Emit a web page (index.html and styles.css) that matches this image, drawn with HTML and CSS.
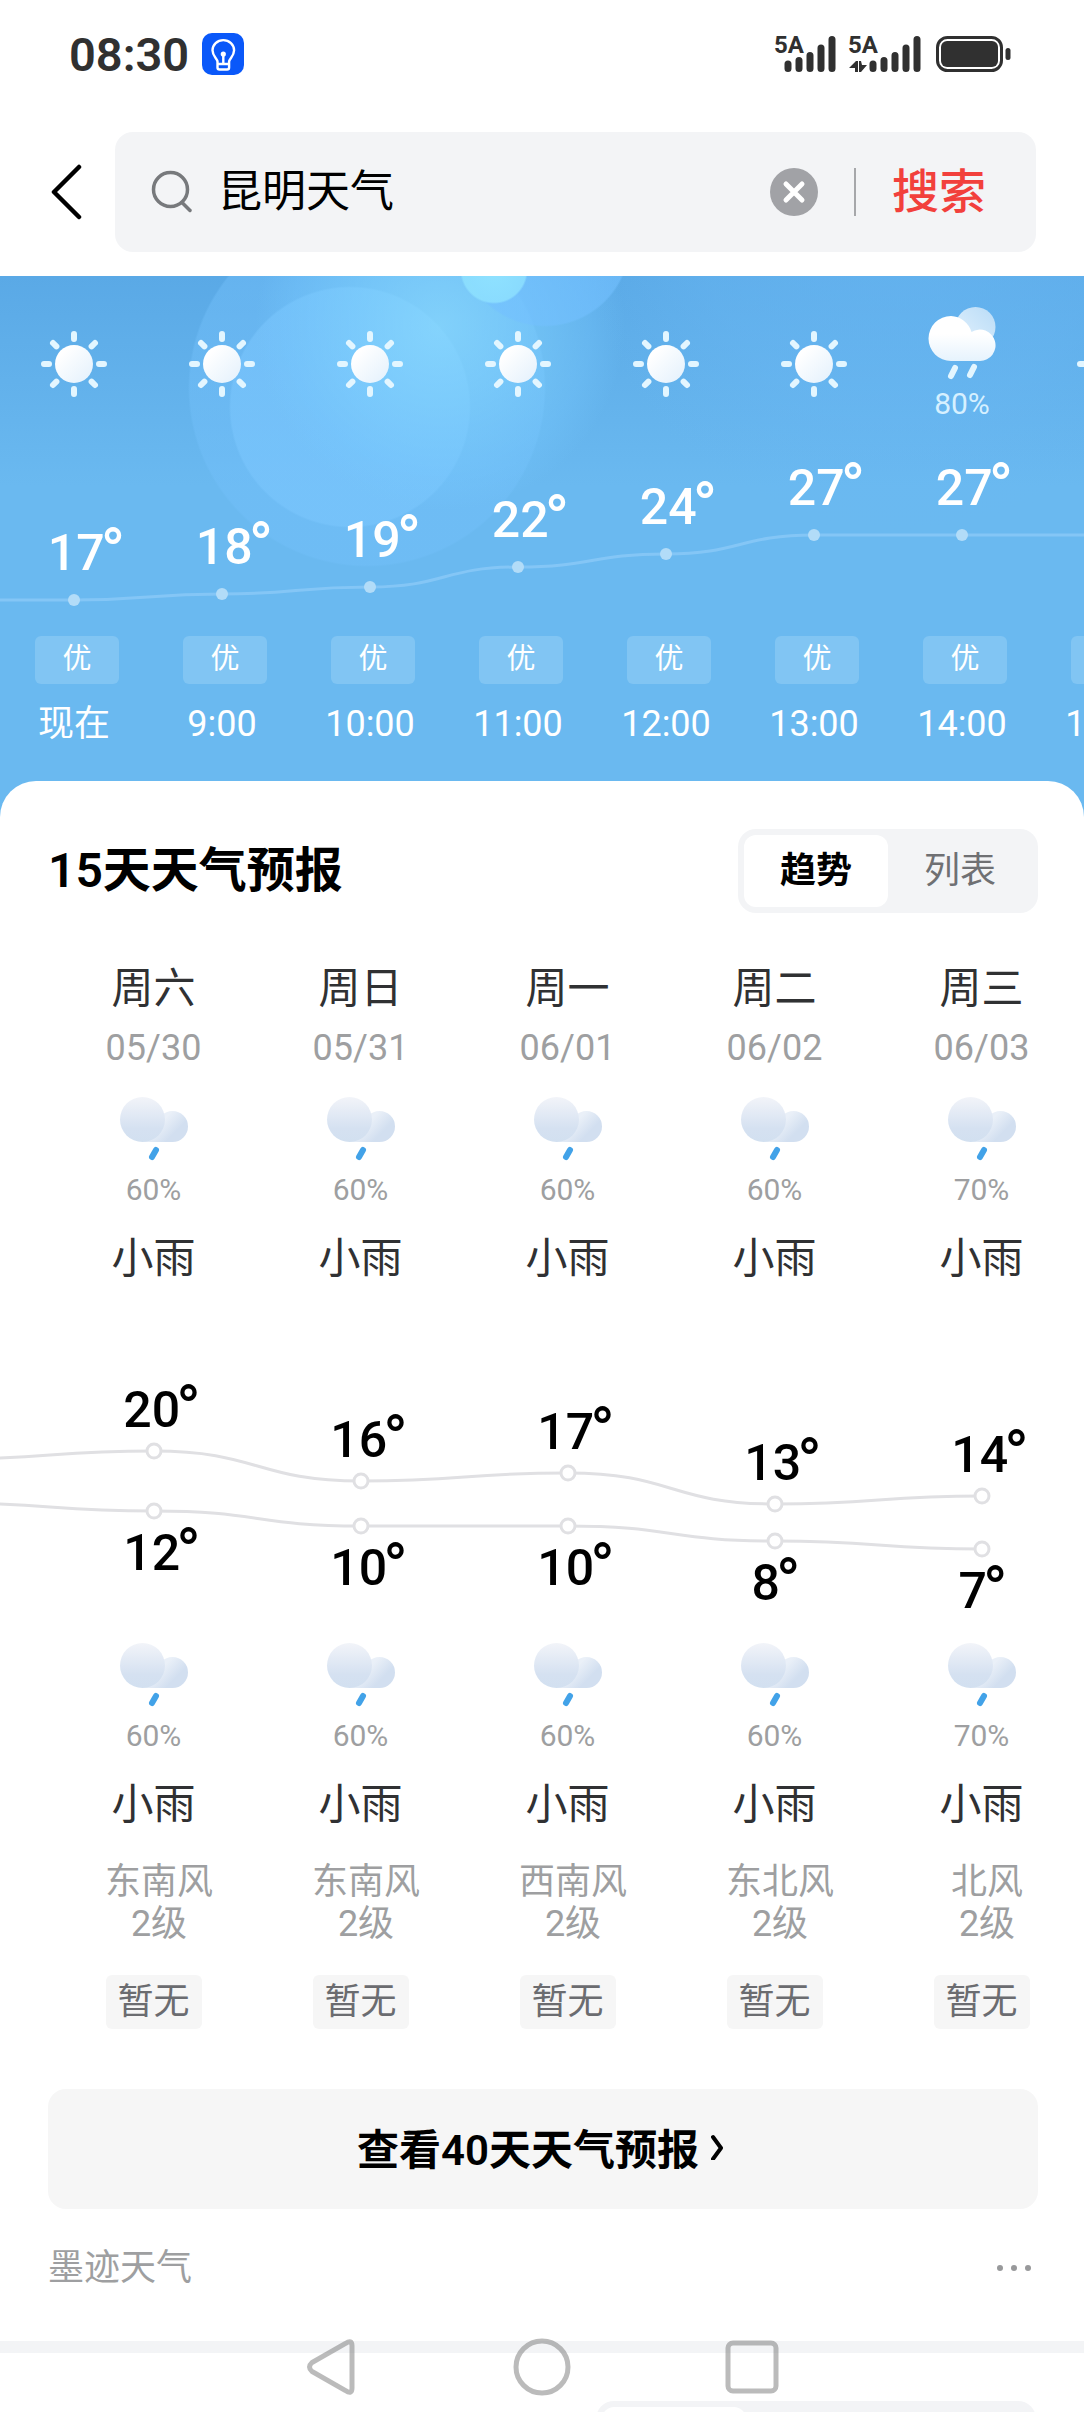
FILE: index.html
```html
<!DOCTYPE html>
<html lang="zh-CN">
<head>
  <meta charset="UTF-8">
  <meta name="viewport" content="width=device-width, initial-scale=1">
  <title>昆明天气</title>
  <link rel="stylesheet" href="styles.css">
</head>
<body>
  <!-- shared icons -->
  <svg class="defs" width="0" height="0" aria-hidden="true">
    <defs>
      <linearGradient id="sun-fill" x1="0" y1="0" x2="1" y2="1">
        <stop offset="0.2" stop-color="#ffffff"/>
        <stop offset="1" stop-color="#e2f0fc"/>
      </linearGradient>
      <linearGradient id="white-cloud" x1="0" y1="0" x2="0" y2="1">
        <stop offset="0.4" stop-color="#ffffff"/>
        <stop offset="1" stop-color="#e6f3fd"/>
      </linearGradient>
      <linearGradient id="back-cloud" x1="1" y1="0" x2="0" y2="1">
        <stop offset="0" stop-color="#b9dcf7"/>
        <stop offset="1" stop-color="#e4f2fd"/>
      </linearGradient>
      <linearGradient id="gray-cloud" x1="0" y1="0" x2="0" y2="1">
        <stop offset="0" stop-color="#f2f4f9"/>
        <stop offset="0.7" stop-color="#d5e1f1"/>
        <stop offset="1" stop-color="#d2e0f0"/>
      </linearGradient>
      <linearGradient id="gray-puff" x1="0.2" y1="0.3" x2="0.8" y2="0.7">
        <stop offset="0.3" stop-color="#eaf0f8"/>
        <stop offset="0.9" stop-color="#d2dff0"/>
      </linearGradient>
    </defs>
    <symbol id="sun" viewBox="0 0 72 72">
      <circle cx="36" cy="36" r="19" fill="url(#sun-fill)"/>
      <g stroke="#e3f6ff" stroke-width="6" stroke-linecap="round">
        <path d="M36 6v5M36 61v5M6 36h5M61 36h5"/>
        <path d="M15 15l3.4 3.4M53.6 53.6l3.4 3.4M15 57l3.4-3.4M53.6 18.4l3.4-3.4"/>
      </g>
    </symbol>
    <symbol id="shower" viewBox="0 0 72 80">
      <circle cx="49.500" cy="21" r="20" fill="url(#back-cloud)"/>
      <path d="M25 10a22.500 22.500 0 0 1 20.500 16a15.700 15.700 0 1 1 8.500 29H25a22.500 22.500 0 0 1 0-45z" fill="url(#white-cloud)"/>
      <path d="M29 62l-4 8M48 61l-4 8" stroke="#e3f6ff" stroke-width="6" stroke-linecap="round"/>
    </symbol>
    <symbol id="rain" viewBox="0 0 72 72">
      <path d="M24 49h30.500a15.500 15.500 0 1 0-15.500-15.500z" fill="url(#gray-puff)"/>
      <circle cx="24.500" cy="26.500" r="22.500" fill="url(#gray-cloud)"/>
      <path d="M38 57l-4 7" stroke="#42a2e8" stroke-width="6" stroke-linecap="round"/>
    </symbol>
  </svg>

  <div class="app">
    <div class="status-bar">
      <span class="clock">08:30</span>
      <svg class="bulb" viewBox="0 0 42 42" fill="none" stroke="#fff" stroke-width="2.400">
        <rect width="42" height="42" rx="10" fill="#0a58f9" stroke="none"/>
        <path d="M15.500 28.500c-.4-3-5-5.500-5-11.200a10.800 10.200 0 0 1 21.600 0c0 5.700-4.600 8.200-5 11.200v6q0 2-2 2h-7.600q-2 0-2-2zM15.500 31h11M21.300 22v8" stroke-linejoin="round"/>
        <circle cx="21.300" cy="21" r="2.600" fill="#fff" stroke="none"/>
      </svg>
      <div class="signals">
        <div class="signal">
          <span>5A</span>
          <svg viewBox="0 0 54 38" stroke="#303030" stroke-width="7" stroke-linecap="round">
            <path d="M6 29v4.500M17 25.500v8M28 20.500v13M39 13v20.500M50 4.500v29"/>
          </svg>
        </div>
        <div class="signal">
          <span>5A</span>
          <svg viewBox="-18 0 72 38" stroke="#303030" stroke-width="7" stroke-linecap="round">
            <path d="M-11 26h2v11h-3v-4h-6zM-8 26h2l1 4h5l-6 7h-2z" fill="#303030" stroke="none"/>
            <path d="M6 29v4.500M17 25.500v8M28 20.500v13M39 13v20.500M50 4.500v29"/>
          </svg>
        </div>
        <svg class="battery" viewBox="0 0 75 36">
          <rect x="1.500" y="1.500" width="64" height="33" rx="10" fill="none" stroke="#303030" stroke-width="3"/>
          <rect x="5" y="5" width="57" height="26" rx="6" fill="#303030"/>
          <rect x="69.500" y="12" width="5" height="12" rx="2.500" fill="#303030"/>
        </svg>
      </div>
    </div>

    <form class="search" onsubmit="return false">
      <button class="back" type="button" aria-label="返回">
        <svg viewBox="0 0 32 56" fill="none" stroke="#000" stroke-width="4.500" stroke-linecap="round" stroke-linejoin="round"><path d="M28 3L3 28l25 25"/></svg>
      </button>
      <div class="search-box">
        <svg class="magnifier" viewBox="0 0 42 44" fill="none" stroke="#77797c" stroke-width="3.500" stroke-linecap="round">
          <circle cx="19.500" cy="19.500" r="17"/>
          <path d="M31 32.500l8 8"/>
        </svg>
        <input type="text" aria-label="搜索内容" value="昆明天气">
        <button class="clear" type="button" aria-label="清除">
          <svg viewBox="0 0 48 48" stroke="#fff" stroke-width="5" stroke-linecap="round"><circle cx="24" cy="24" r="24" fill="#a1a2a6" stroke="none"/><path d="M16 16l16 16M32 16L16 32"/></svg>
        </button>
        <button class="submit" type="submit">搜索</button>
      </div>
    </form>

    <section class="sky">
      <div class="hours">
        <div class="hour-icon"><svg class="sun"><use href="#sun"/></svg></div>
        <div class="hour-icon"><svg class="sun"><use href="#sun"/></svg></div>
        <div class="hour-icon"><svg class="sun"><use href="#sun"/></svg></div>
        <div class="hour-icon"><svg class="sun"><use href="#sun"/></svg></div>
        <div class="hour-icon"><svg class="sun"><use href="#sun"/></svg></div>
        <div class="hour-icon"><svg class="sun"><use href="#sun"/></svg></div>
        <div class="hour-icon"><svg class="shower"><use href="#shower"/></svg><span>80%</span></div>
        <div class="hour-icon"><svg class="sun"><use href="#sun"/></svg></div>
      </div>
      <div class="hours hour-chart">
        <svg class="curve" viewBox="0 0 1184 212">
          <path d="M0 176H74C148 176 148 170 222 170S296 163 370 163S444 143 518 143S592 130 666 130S740 111 814 111H1184" fill="none" stroke="#84c6f6" stroke-width="3"/>
          <g fill="#b2dcf8">
            <circle cx="74" cy="176" r="6"/>
            <circle cx="222" cy="170" r="6"/>
            <circle cx="370" cy="163" r="6"/>
            <circle cx="518" cy="143" r="6"/>
            <circle cx="666" cy="130" r="6"/>
            <circle cx="814" cy="111" r="6"/>
            <circle cx="962" cy="111" r="6"/>
          </g>
        </svg>
        <span class="temp" style="margin-top: 104px">17<i>°</i></span>
        <span class="temp" style="margin-top: 98px">18<i>°</i></span>
        <span class="temp" style="margin-top: 91px">19<i>°</i></span>
        <span class="temp" style="margin-top: 71px">22<i>°</i></span>
        <span class="temp" style="margin-top: 58px">24<i>°</i></span>
        <span class="temp" style="margin-top: 39px">27<i>°</i></span>
        <span class="temp" style="margin-top: 39px">27<i>°</i></span>
      </div>
      <div class="hours">
        <div class="hour"><span class="air">优</span><time>现在</time></div>
        <div class="hour"><span class="air">优</span><time>9:00</time></div>
        <div class="hour"><span class="air">优</span><time>10:00</time></div>
        <div class="hour"><span class="air">优</span><time>11:00</time></div>
        <div class="hour"><span class="air">优</span><time>12:00</time></div>
        <div class="hour"><span class="air">优</span><time>13:00</time></div>
        <div class="hour"><span class="air">优</span><time>14:00</time></div>
        <div class="hour"><span class="air"></span><time>15:00</time></div>
      </div>
    </section>

    <section class="card">
      <header class="card-head">
        <h2>15天天气预报</h2>
        <div class="toggle">
          <button class="active" type="button">趋势</button>
          <button type="button">列表</button>
        </div>
      </header>

      <div class="days">
        <div class="day"><b>周六</b><time>05/30</time><svg><use href="#rain"/></svg><small>60%</small><b>小雨</b></div>
        <div class="day"><b>周日</b><time>05/31</time><svg><use href="#rain"/></svg><small>60%</small><b>小雨</b></div>
        <div class="day"><b>周一</b><time>06/01</time><svg><use href="#rain"/></svg><small>60%</small><b>小雨</b></div>
        <div class="day"><b>周二</b><time>06/02</time><svg><use href="#rain"/></svg><small>60%</small><b>小雨</b></div>
        <div class="day"><b>周三</b><time>06/03</time><svg><use href="#rain"/></svg><small>70%</small><b>小雨</b></div>
      </div>

      <div class="days day-chart">
        <svg class="curve" viewBox="0 0 1035 358" fill="none" stroke="#e0e0e3" stroke-width="3">
          <path d="M-104 178C0 178 0 170 104 170S207 200 311 200S414 192 518 192S621 223 725 223S828 215 932 215"/>
          <path d="M-104 222C0 222 0 230 104 230S207 245 311 245H518C621 245 621 260 725 260S828 268 932 268"/>
          <g fill="#fff">
            <circle cx="104" cy="170" r="7"/>
            <circle cx="311" cy="200" r="7"/>
            <circle cx="518" cy="192" r="7"/>
            <circle cx="725" cy="223" r="7"/>
            <circle cx="932" cy="215" r="7"/>
            <circle cx="104" cy="230" r="7"/>
            <circle cx="311" cy="245" r="7"/>
            <circle cx="518" cy="245" r="7"/>
            <circle cx="725" cy="260" r="7"/>
            <circle cx="932" cy="268" r="7"/>
          </g>
        </svg>
        <div class="range"><span style="margin-top: 104px">20<i>°</i></span><span style="margin-top: 93px">12<i>°</i></span></div>
        <div class="range"><span style="margin-top: 134px">16<i>°</i></span><span style="margin-top: 78px">10<i>°</i></span></div>
        <div class="range"><span style="margin-top: 126px">17<i>°</i></span><span style="margin-top: 86px">10<i>°</i></span></div>
        <div class="range"><span style="margin-top: 157px">13<i>°</i></span><span class="single" style="margin-top: 70px">8<i>°</i></span></div>
        <div class="range"><span style="margin-top: 149px">14<i>°</i></span><span class="single" style="margin-top: 86px">7<i>°</i></span></div>
      </div>

      <div class="days">
        <div class="day"><svg><use href="#rain"/></svg><small>60%</small><b>小雨</b><p>东南风<br>2级</p><span class="air">暂无</span></div>
        <div class="day"><svg><use href="#rain"/></svg><small>60%</small><b>小雨</b><p>东南风<br>2级</p><span class="air">暂无</span></div>
        <div class="day"><svg><use href="#rain"/></svg><small>60%</small><b>小雨</b><p>西南风<br>2级</p><span class="air">暂无</span></div>
        <div class="day"><svg><use href="#rain"/></svg><small>60%</small><b>小雨</b><p>东北风<br>2级</p><span class="air">暂无</span></div>
        <div class="day"><svg><use href="#rain"/></svg><small>70%</small><b>小雨</b><p>北风<br>2级</p><span class="air">暂无</span></div>
      </div>

      <button class="more" type="button">查看40天天气预报
        <svg viewBox="0 0 14 28" fill="none" stroke="#000" stroke-width="4" stroke-linecap="round" stroke-linejoin="round"><path d="M2 5l8 11-8 11"/></svg>
      </button>

      <footer class="source">
        <span>墨迹天气</span>
        <button type="button" aria-label="更多">
          <svg viewBox="0 0 34 8" fill="#98999b"><circle cx="3" cy="4" r="3"/><circle cx="17" cy="4" r="3"/><circle cx="31" cy="4" r="3"/></svg>
        </button>
      </footer>
    </section>

    <section class="next-card">
      <div class="next-toggle"><div></div></div>
    </section>
  </div>

  <nav class="nav-bar">
    <button type="button" aria-label="返回">
      <svg viewBox="0 0 60 60"><path d="M43.500 6.500Q50 2 50 9v42q0 7-6.500 2.500L10 34.500q-5-4.500 0-9z"/></svg>
    </button>
    <button type="button" aria-label="主屏幕">
      <svg viewBox="0 0 60 60"><circle cx="30" cy="30" r="26"/></svg>
    </button>
    <button type="button" aria-label="最近任务">
      <svg viewBox="0 0 60 60"><rect x="6" y="6" width="48" height="48" rx="5"/></svg>
    </button>
  </nav>
</body>
</html>
```

FILE: styles.css
```css
* {
  box-sizing: border-box;
}
body {
  margin: 0;
  background: #fff;
  color: #000;
  font-family: Roboto, "Noto Sans CJK SC", sans-serif;
}
button, input {
  margin: 0;
  padding: 0;
  border: 0;
  background: none;
  font-family: inherit;
  color: inherit;
}
svg {
  display: block;
  flex: none;
}
.defs {
  position: absolute;
}
.app {
  height: 100vh;
  overflow: hidden;
}

/* status bar */
.status-bar {
  display: flex;
  align-items: center;
  height: 108px;
  padding: 0 73px 0 69px;
}
.clock {
  font-size: 47px;
  font-weight: 600;
  color: #303030;
}
.bulb {
  width: 42px;
  height: 42px;
  margin-left: 13px;
}
.signals {
  display: flex;
  align-items: center;
  gap: 15px;
  margin-left: auto;
}
.signal {
  position: relative;
  display: flex;
  justify-content: flex-end;
  width: 62px;
  margin-right: -3px;
  color: #303030;
}
.signal + .signal {
  width: 73px;
  margin-right: 0;
}
.signal span {
  position: absolute;
  left: 0;
  top: 0;
  font-size: 24px;
  font-weight: 700;
  line-height: 20px;
}
.signal svg {
  height: 38px;
}
.battery {
  width: 75px;
  height: 36px;
}

/* search */
.search {
  display: flex;
  align-items: center;
  gap: 32px;
  padding: 24px 48px 24px 51px;
}
.back svg {
  width: 32px;
  height: 56px;
}
.search-box {
  display: flex;
  flex: 1;
  align-items: center;
  height: 120px;
  padding: 0 50px 0 36px;
  border-radius: 18px;
  background: #f3f4f6;
}
.magnifier {
  width: 42px;
  height: 44px;
}
.search-box input {
  flex: 1;
  min-width: 0;
  height: 64px;
  margin-left: 25px;
  font-size: 44px;
  line-height: 64px;
  outline: none;
}
.clear svg {
  width: 48px;
  height: 48px;
}
.submit {
  height: 48px;
  margin-left: 36px;
  padding-left: 36px;
  border-left: 2px solid #a6a7aa;
  font-size: 47px;
  font-weight: 500;
  line-height: 46px;
  color: #f2403c;
}

/* hourly forecast */
.sky {
  padding: 28px 0 69px;
  overflow: hidden;
  color: #fff;
  background:
    radial-gradient(circle at 494px -6px, #8fe2ff 0, rgba(143, 226, 255, 0.8) 32px, transparent 34px),
    radial-gradient(circle at 545px -35px, rgba(115, 192, 255, 0.6) 84px, transparent 86px),
    radial-gradient(circle at 440px 50px, rgba(140, 220, 255, 0.7) 0, rgba(130, 212, 255, 0.55) 80px, rgba(120, 202, 255, 0.3) 150px, transparent 185px),
    radial-gradient(circle at 350px 131px, rgba(125, 200, 255, 0.5) 119px, transparent 121px),
    radial-gradient(circle at 367px 112px, rgba(115, 192, 250, 0.45) 177px, transparent 179px),
    radial-gradient(circle at 900px -60px, rgba(106, 184, 244, 0.6) 0, rgba(106, 184, 244, 0.4) 200px, transparent 320px),
    linear-gradient(#5aa9e6, #6ab9f0 210px, #6ab9f0);
}
.hours {
  display: grid;
  grid-template-columns: repeat(8, 148px);
}
.hour-icon {
  display: flex;
  flex-direction: column;
  align-items: center;
  justify-content: center;
  height: 120px;
  font-size: 30px;
  line-height: 36px;
  color: #d6f0ff;
}
.sun {
  width: 72px;
  height: 72px;
}
.shower {
  width: 72px;
  height: 80px;
}
.hour-chart {
  height: 212px;
}
.hour-chart .curve {
  grid-area: 1 / 1 / 2 / 9;
  width: 1184px;
  height: 212px;
}
.temp {
  grid-row: 1;
  padding-left: 22px;
  text-align: center;
  font-size: 50px;
  font-weight: 500;
  line-height: 50px;
}
/* larger degree ring, raised above the digits */
.temp i, .range i {
  margin: 0 -3px 0 -4px;
  font-size: 64px;
  font-style: normal;
  line-height: 0;
  vertical-align: -4px;
}
.temp:nth-of-type(1) { grid-column: 1; }
.temp:nth-of-type(2) { grid-column: 2; }
.temp:nth-of-type(3) { grid-column: 3; }
.temp:nth-of-type(4) { grid-column: 4; }
.temp:nth-of-type(5) { grid-column: 5; }
.temp:nth-of-type(6) { grid-column: 6; }
.temp:nth-of-type(7) { grid-column: 7; }
.hour {
  display: flex;
  flex-direction: column;
  align-items: center;
  gap: 16px;
}
.hour .air {
  width: 84px;
  height: 48px;
  margin-left: 6px;
  border-radius: 6px;
  background: #81c5f3;
  text-align: center;
  font-size: 29px;
  line-height: 46px;
}
.hour time {
  font-size: 36px;
  line-height: 48px;
}

/* 15 day forecast */
.card {
  margin-top: -36px;
  padding: 48px 46px 49px 48px;
  border-radius: 36px 36px 0 0;
  background: #fff;
}
.card-head {
  display: flex;
  align-items: center;
  justify-content: space-between;
  margin-bottom: 52px;
}
.card-head h2 {
  margin: 0;
  font-size: 48px;
  font-weight: 600;
  line-height: 60px;
}
.toggle {
  display: flex;
  padding: 6px;
  border-radius: 18px;
  background: #f3f4f6;
}
.toggle button {
  width: 144px;
  height: 72px;
  border-radius: 12px;
  font-size: 36px;
  line-height: 70px;
  color: #6f7073;
}
.toggle .active {
  background: #fff;
  font-weight: 700;
  color: #000;
}
.days {
  display: grid;
  grid-template-columns: repeat(5, 207px);
  margin-left: 2px;
}
.day {
  display: flex;
  flex-direction: column;
  align-items: center;
}
.day b {
  font-size: 42px;
  font-weight: 400;
  line-height: 48px;
  color: #303133;
}
.day time {
  margin: 11px 0 21px;
  font-size: 36px;
  line-height: 48px;
  color: #9e9fa1;
}
.day svg {
  width: 72px;
  height: 72px;
}
.day small {
  margin: 7px 0 27px;
  font-size: 30px;
  line-height: 36px;
  color: #9e9fa1;
}
.day-chart {
  height: 358px;
  margin-top: -2px;
}
.day-chart .curve {
  grid-area: 1 / 1 / 2 / 6;
  width: 1035px;
  height: 358px;
  overflow: visible;
}
.range {
  display: flex;
  flex-direction: column;
  grid-row: 1;
  text-align: center;
  font-size: 50px;
  font-weight: 500;
  line-height: 50px;
}
.range:nth-of-type(1) { grid-column: 1; }
.range:nth-of-type(2) { grid-column: 2; }
.range:nth-of-type(3) { grid-column: 3; }
.range:nth-of-type(4) { grid-column: 4; }
.range:nth-of-type(5) { grid-column: 5; }
.range span {
  padding-left: 14px;
}
.range .single {
  padding-left: 0;
}
.day p {
  margin: 32px 0 30px;
  padding-left: 11px;
  text-align: center;
  font-size: 36px;
  line-height: 42px;
  color: #9e9fa1;
}
.day .air {
  width: 96px;
  height: 54px;
  border-radius: 6px;
  background: #f6f6f6;
  text-align: center;
  font-size: 36px;
  line-height: 54px;
  color: #6b6c70;
}
.more {
  display: flex;
  align-items: center;
  justify-content: center;
  gap: 12px;
  width: 100%;
  height: 120px;
  margin-top: 60px;
  padding: 0 4px 6px 0;
  border-radius: 18px;
  background: #f6f6f6;
  font-size: 42px;
  font-weight: 600;
}
.more svg {
  width: 14px;
  height: 28px;
}
.source {
  display: flex;
  align-items: center;
  justify-content: space-between;
  margin-top: 35px;
  padding-right: 7px;
  font-size: 36px;
  line-height: 48px;
  color: #9e9fa1;
}
.source svg {
  width: 34px;
  height: 8px;
}

/* top edge of the next card */
.next-card {
  display: flex;
  justify-content: flex-end;
  padding: 48px 48px 0;
  border-top: 12px solid #f3f4f6;
}
.next-toggle {
  width: 440px;
  padding: 6px;
  border-radius: 18px;
  background: #f3f4f6;
}
.next-toggle div {
  width: 144px;
  height: 72px;
  border-radius: 12px;
  background: #fff;
}

/* system navigation */
.nav-bar {
  position: fixed;
  left: 0;
  right: 0;
  bottom: 0;
  display: flex;
  justify-content: center;
  gap: 150px;
  height: 75px;
}
.nav-bar button {
  display: flex;
}
.nav-bar svg {
  width: 60px;
  height: 60px;
  fill: none;
  stroke: rgba(120, 120, 120, 0.5);
  stroke-width: 5;
}
```
